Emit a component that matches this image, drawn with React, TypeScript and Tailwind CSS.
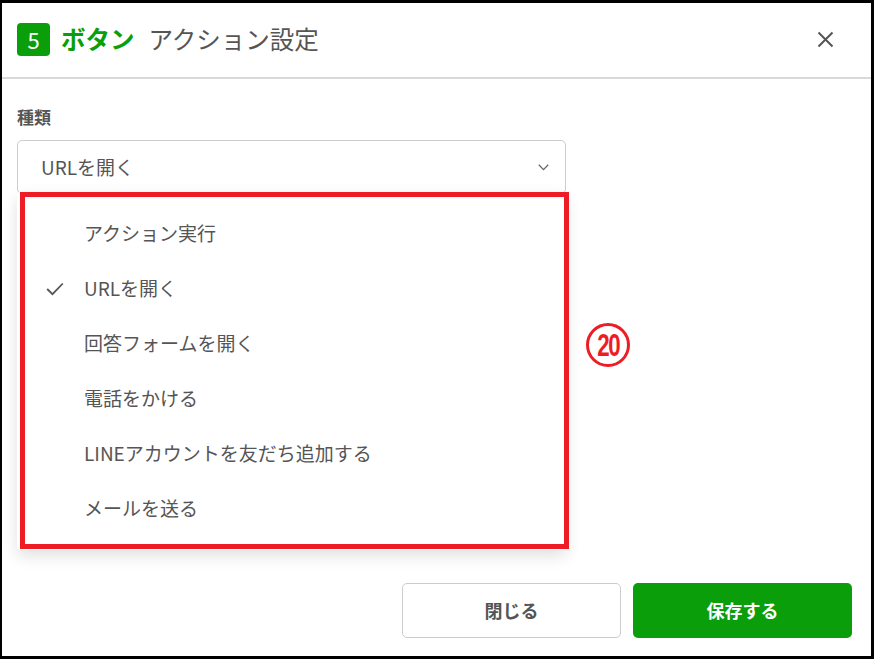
import React from "react";

const items = [
  "アクション実行",
  "URLを開く",
  "回答フォームを開く",
  "電話をかける",
  "LINEアカウントを友だち追加する",
  "メールを送る",
];

export default function App() {
  return (
    <div
      className="relative flex h-[659px] w-[874px] flex-col overflow-hidden border-b-[3px] border-l-2 border-r-[3px] border-t-[3px] border-black bg-white text-[#555]"
      style={{ fontFamily: '"Noto Sans CJK JP", "Noto Sans", sans-serif' }}
    >
      {/* Header */}
      <div className="flex h-[74px] shrink-0 items-center pl-[15px] pr-[37px] pb-[2px]">
        <div className="flex h-[33px] w-[33px] items-center justify-center rounded-[4px] bg-[#0a9e0a] text-[22px] leading-none text-white">
          5
        </div>
        <span className="ml-[11px] text-[24.5px] font-bold leading-none text-[#0a9e0a]">ボタン</span>
        <span className="ml-[14px] text-[24.5px] leading-none text-[#555]">アクション設定</span>
        <div className="flex-1" />
        <svg width="17" height="17" viewBox="0 0 17 17" className="mt-[1px]">
          <path d="M1.5 1.5 L15.5 15.5 M15.5 1.5 L1.5 15.5" stroke="#555" strokeWidth="2" fill="none" />
        </svg>
      </div>
      <div className="h-[2px] shrink-0 bg-[#d9d9d9]" />

      {/* Body */}
      <div className="flex flex-1 flex-col px-[15px]">
        <div className="mt-[26px] text-[17px] font-bold leading-[24px] text-[#555]">種類</div>
        <div className="relative mt-[11px] flex h-[54px] w-[549px] items-center rounded-[5px] border border-[#ccc] pl-[23px] pr-[16px]">
          <span className="text-[19px] text-[#555]">URLを開く</span>
          <div className="flex-1" />
          <svg width="11" height="7" viewBox="0 0 11 7">
            <path d="M0.8 0.8 L5.5 5.6 L10.2 0.8" stroke="#666" strokeWidth="1.3" fill="none" />
          </svg>
        </div>

        <div className="flex-1" />

        {/* Footer */}
        <div className="flex justify-end gap-[12px] pb-[18px] pr-[4px]">
          <button className="flex h-[55px] w-[219px] items-center justify-center rounded-[5px] border border-[#ccc] bg-white text-[18px] font-bold text-[#555]">
            閉じる
          </button>
          <button className="flex h-[55px] w-[219px] items-center justify-center rounded-[5px] bg-[#0a9e0a] text-[18px] font-bold text-white">
            保存する
          </button>
        </div>
      </div>

      {/* Dropdown menu */}
      <div className="absolute left-[15px] top-[189px] w-[549px] rounded-[4px] bg-white py-[14px] shadow-[0_6px_16px_rgba(0,0,0,0.12)]">
        {items.map((it, i) => (
          <div key={it} className="flex h-[55px] items-center">
            <div className="flex w-[67px] justify-end pr-[20px]">
              {i === 1 && (
                <svg width="18" height="14" viewBox="0 0 18 14">
                  <path d="M1.2 7 L6.5 12.2 L16.8 1.5" stroke="#555" strokeWidth="1.8" fill="none" />
                </svg>
              )}
            </div>
            <span className="text-[19px] text-[#555]">{it}</span>
          </div>
        ))}
      </div>

      {/* Red annotation box */}
      <div className="pointer-events-none absolute left-[18px] top-[189px] h-[357px] w-[549px] border-[5px] border-[#ee1c25]" />

      {/* Annotation number */}
      <div className="absolute left-[584px] top-[320px] flex h-[44px] w-[44px] items-center justify-center rounded-full border-[3px] border-[#ee1c25] bg-white">
        <span
          className="text-[31px] font-bold leading-none tracking-[-2px] text-[#ee1c25]"
          style={{ fontFamily: '"Liberation Sans", sans-serif', transform: "scaleX(0.72)" }}
        >
          20
        </span>
      </div>
    </div>
  );
}
